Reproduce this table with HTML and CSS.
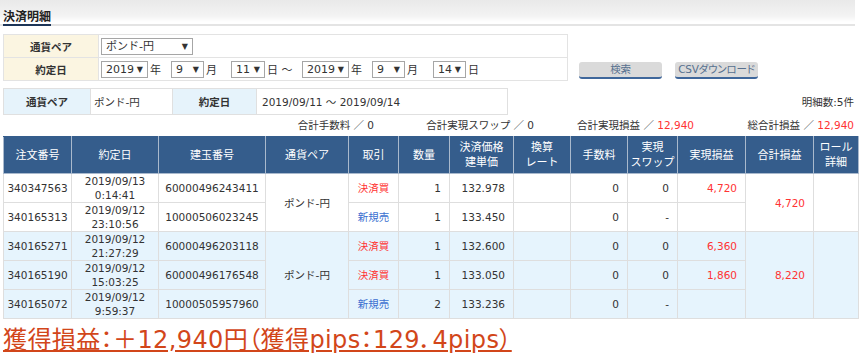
FILE: index.html
```html
<!DOCTYPE html>
<html lang="ja">
<head>
<meta charset="utf-8">
<title>決済明細</title>
<link rel="stylesheet" href="styles.css">
</head>
<body>
<div class="page">
  <div class="head"><h1 class="title">決済明細</h1></div>

  <div class="search">
    <table class="form">
      <tr>
        <th>通貨ペア</th>
        <td><span class="sel w92">ポンド-円<i>▼</i></span></td>
      </tr>
      <tr>
        <th>約定日</th>
        <td>
          <div class="dates">
            <span class="sel w47">2019<i>▼</i></span><span class="unit u23">年</span>
            <span class="sel w33">9<i>▼</i></span><span class="unit u27">月</span>
            <span class="sel w34">11<i>▼</i></span><span class="unit u37">日 ～</span>
            <span class="sel w47">2019<i>▼</i></span><span class="unit u23">年</span>
            <span class="sel w33">9<i>▼</i></span><span class="unit u28">月</span>
            <span class="sel w33">14<i>▼</i></span><span class="unit">日</span>
          </div>
        </td>
      </tr>
    </table>
    <div class="btns">
      <button class="btn" type="button">検索</button>
      <button class="btn" type="button">CSVダウンロード</button>
    </div>
  </div>

  <div class="inforow">
    <table class="info">
      <tr>
        <th class="c86">通貨ペア</th>
        <td class="c81">ポンド-円</td>
        <th class="c83">約定日</th>
        <td class="c250">2019/09/11 ～ 2019/09/14</td>
      </tr>
    </table>
    <div class="count">明細数:5件</div>
  </div>

  <div class="sums">
    <div class="sum">合計手数料 ／ 0</div>
    <div class="sum">合計実現スワップ ／ 0</div>
    <div class="sum">合計実現損益 ／ <span class="red">12,940</span></div>
    <div class="sum">総合計損益 ／ <span class="red">12,940</span></div>
  </div>

  <table class="list">
    <colgroup>
      <col class="k68"><col class="k87"><col class="k107"><col class="k83"><col class="k50"><col class="k51"><col class="k64"><col class="k57"><col class="k57"><col class="k50"><col class="k68"><col class="k68"><col class="k45">
    </colgroup>
    <thead>
      <tr>
        <th>注文番号</th><th>約定日</th><th>建玉番号</th><th>通貨ペア</th><th>取引</th><th>数量</th><th>決済価格<br>建単価</th><th>換算<br>レート</th><th>手数料</th><th>実現<br>スワップ</th><th>実現損益</th><th>合計損益</th><th>ロール<br>詳細</th>
      </tr>
    </thead>
    <tbody>
      <tr>
        <td>340347563</td><td>2019/09/13<br>0:14:41</td><td>60000496243411</td><td rowspan="2">ポンド-円</td><td class="red">決済買</td><td class="num">1</td><td class="num">132.978</td><td></td><td class="num">0</td><td class="num">0</td><td class="num red">4,720</td><td class="num red" rowspan="2">4,720</td><td rowspan="2"></td>
      </tr>
      <tr>
        <td>340165313</td><td>2019/09/12<br>23:10:56</td><td>10000506023245</td><td class="blue">新規売</td><td class="num">1</td><td class="num">133.450</td><td></td><td class="num">0</td><td class="num">-</td><td></td>
      </tr>
      <tr class="alt">
        <td>340165271</td><td>2019/09/12<br>21:27:29</td><td>60000496203118</td><td rowspan="3">ポンド-円</td><td class="red">決済買</td><td class="num">1</td><td class="num">132.600</td><td></td><td class="num">0</td><td class="num">0</td><td class="num red">6,360</td><td class="num red" rowspan="3">8,220</td><td rowspan="3"></td>
      </tr>
      <tr class="alt">
        <td>340165190</td><td>2019/09/12<br>15:03:25</td><td>60000496176548</td><td class="red">決済買</td><td class="num">1</td><td class="num">133.050</td><td></td><td class="num">0</td><td class="num">0</td><td class="num red">1,860</td>
      </tr>
      <tr class="alt">
        <td>340165072</td><td>2019/09/12<br>9:59:37</td><td>10000505957960</td><td class="blue">新規売</td><td class="num">2</td><td class="num">133.236</td><td></td><td class="num">0</td><td class="num">-</td><td></td>
      </tr>
    </tbody>
  </table>

  <p class="result">獲得損益：＋12,940円（獲得pips：129．4pips）</p>
</div>
</body>
</html>
```

FILE: styles.css
```css
html, body {
  margin: 0;
  padding: 0;
  background: #fff;
}
body {
  font-family: "DejaVu Sans", "Noto Sans CJK JP", sans-serif;
  font-size: 10.5px;
  color: #333;
}
.page {
  width: 862px;
}

/* header band */
.head {
  height: 24px;
  margin-right: 7px;
  padding-left: 3px;
  border-bottom: 2px solid #e4e4e4;
  background: linear-gradient(#e9e9e9, #f3f3f3 16px, #fff 22px);
  display: flex;
  align-items: flex-end;
}
.title {
  margin: 0 0 -2px;
  font-size: 12px;
  font-weight: bold;
  line-height: 14px;
  color: #222;
  border-bottom: 2px solid #1d3557;
}

/* search form */
.search {
  display: flex;
  align-items: flex-end;
  margin-top: 8px;
  padding-left: 3px;
}
.form {
  border-collapse: collapse;
  width: 565px;
}
.form th, .form td {
  border: 1px solid #e3e3e3;
  height: 22px;
  padding: 0;
}
.form th {
  width: 94px;
  background: #fbf5e1;
  font-weight: bold;
  text-align: center;
}
.form td {
  padding-left: 2px;
}
.dates {
  display: flex;
  align-items: center;
}
.sel {
  display: inline-flex;
  align-items: center;
  justify-content: space-between;
  box-sizing: border-box;
  height: 17px;
  border: 1px solid #a6a6a6;
  background: #fff;
  padding: 0 4px 0 4px;
  vertical-align: middle;
  line-height: 15px;
  font-size: 11px;
}
.sel i {
  font-style: normal;
  font-size: 8px;
}
.w92 { width: 92px; }
.w47 { width: 47px; }
.w33 { width: 33px; }
.w34 { width: 34px; }
.unit {
  box-sizing: border-box;
  padding-left: 2px;
  font-size: 11px;
}
.u23 { width: 23px; }
.u27 { width: 27px; }
.u28 { width: 28px; }
.u37 { width: 37px; }

.btns {
  display: flex;
  gap: 13px;
  margin-left: 11px;
  margin-bottom: 2px;
}
.btn {
  width: 83px;
  height: 17px;
  padding: 0;
  border: 0;
  border-bottom: 2px solid #3f679b;
  border-radius: 3px;
  background: #dadada;
  color: #56708f;
  font: inherit;
  font-size: 10.5px;
  line-height: 15px;
  white-space: nowrap;
  font-feature-settings: "palt";
  letter-spacing: -0.2px;
}

/* info row */
.inforow {
  display: flex;
  align-items: center;
  justify-content: space-between;
  margin: 7px 8px 0 3px;
}
.info {
  border-collapse: collapse;
}
.info th, .info td {
  border: 1px solid #e0e0e0;
  height: 25px;
  padding: 0;
}
.info th {
  background: #e6f3fb;
  font-weight: bold;
  text-align: center;
}
.info td {
  padding-left: 3px;
  text-align: left;
}
.info td.c250 { padding-left: 5px; }
.c86 { width: 86px; }
.c81 { width: 78px; }
.c83 { width: 83px; }
.c250 { width: 245px; }

/* sums */
.sums {
  display: flex;
  justify-content: flex-end;
  margin: 3px 8px 0 0;
  line-height: 14px;
}
.sum {
  width: 160px;
  text-align: right;
}
.red { color: #ff3333; }
.blue { color: #3a6fd0; }

/* list table */
.list {
  border-collapse: collapse;
  table-layout: fixed;
  width: 855px;
  margin: 4px 0 0 3px;
}
.k68 { width: 68px; }
.k87 { width: 87px; }
.k107 { width: 107px; }
.k83 { width: 83px; }
.k50 { width: 50px; }
.k51 { width: 51px; }
.k64 { width: 64px; }
.k57 { width: 57px; }
.k45 { width: 45px; }
.list th {
  background: #355d8c;
  color: #fff;
  font-weight: normal;
  font-size: 11px;
  height: 36px;
  padding: 0;
  border: 1px solid #a9b9cd;
  border-top-color: #355d8c;
  line-height: 15px;
}
.list td {
  border: 1px solid #dedede;
  height: 28px;
  padding: 0;
  line-height: 14px;
  text-align: center;
  background: #fff;
}
.list td.num {
  text-align: right;
  padding-right: 8px;
}
.list tr.alt td {
  background: #e6f4fd;
}

/* result */
.result {
  margin: 7px 0 0 3px;
  font-family: "DejaVu Sans", "Noto Sans CJK JP", sans-serif;
  font-feature-settings: "palt";
  font-size: 24px;
  line-height: 28px;
  letter-spacing: 0.4px;
  color: #d2461a;
  text-decoration: underline;
  text-underline-offset: 2px;
}
```
